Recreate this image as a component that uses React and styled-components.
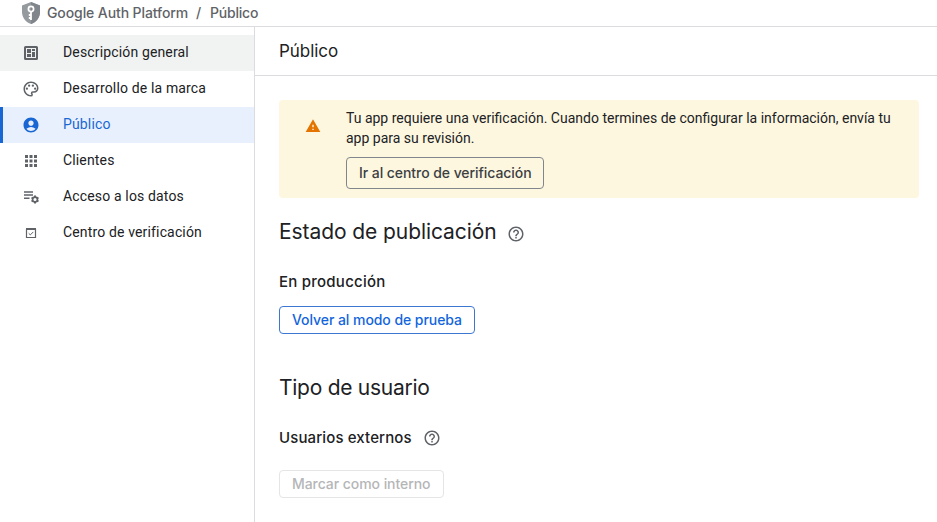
import React from "react";
import styled, { createGlobalStyle, css } from "styled-components";
import { MdOutlinePalette, MdAccountCircle, MdApps, MdHelpOutline, MdWarning } from "react-icons/md";

const Global = createGlobalStyle`
  *, *::before, *::after { box-sizing: border-box; }
  body { margin: 0; background: #fff; color: #202124; font-family: Roboto, sans-serif; font-size: 14px; overflow: hidden; }
  h1, h2, h3, p { margin: 0; }
`;

const display = css`font-family: Inter, sans-serif;`;

const Page = styled.div`
  display: flex;
  flex-direction: column;
  height: 522px;
`;

const TopBar = styled.header`
  ${display}
  flex: none;
  height: 27px;
  display: flex;
  align-items: center;
  padding-left: 22px;
  border-bottom: 1px solid #dadce0;
  color: #5f6368;
  font-size: 14px;
  font-weight: 500;
  line-height: 26px;
  white-space: nowrap;
`;

const Crumb = styled.span`
  width: ${(p) => p.$w}px;
  margin-left: ${(p) => p.$gap}px;
  letter-spacing: ${(p) => p.$track}px;
`;

const Body = styled.div`
  flex: 1;
  display: flex;
  min-height: 0;
`;

const Sidebar = styled.nav`
  width: 255px;
  flex: none;
  padding-top: 8px;
  border-right: 1px solid #dadce0;
`;

const NavItem = styled.a`
  height: 36px;
  display: flex;
  align-items: center;
  padding-left: 19px;
  border-left: 3px solid ${(p) => (p.$active ? "#1967d2" : "transparent")};
  background: ${(p) => (p.$active ? "#e8f0fe" : p.$hover ? "#f1f3f2" : "transparent")};
  color: ${(p) => (p.$active ? "#1967d2" : "#202124")};
  svg { flex: none; color: ${(p) => (p.$active ? "#1967d2" : "#5f6368")}; }
`;

const NavLabel = styled.span`
  margin-left: 23px;
  line-height: 20px;
  padding-bottom: 2px;
  letter-spacing: 0.15px;
  white-space: nowrap;
`;

const Main = styled.main`
  flex: 1;
  min-width: 0;
`;

const TitleBar = styled.div`
  height: 49px;
  padding-left: 24px;
  display: flex;
  align-items: center;
  border-bottom: 1px solid #dadce0;
`;

const Title = styled.h1`
  ${display}
  font-size: 17px;
  font-weight: 400;
  letter-spacing: -0.05px;
`;

const Content = styled.div`
  padding: 24px 18px 0 24px;
`;

const Notice = styled.section`
  height: 98px;
  border-radius: 4px;
  background: #fef7e0;
  display: flex;
  padding: 8px 20px 0 26px;
`;

const NoticeIcon = styled.span`
  width: 41px;
  flex: none;
  padding-top: 10px;
  color: #e37400;
  svg { display: block; }
`;

const NoticeText = styled.p`
  line-height: 20px;
  margin-bottom: 9px;
  white-space: nowrap;
`;

const tones = {
  neutral: ["#3c4043", "#80868b"],
  primary: ["#1265dc", "#3c78d0"],
  disabled: ["#b5b6b7", "#e4e5e6"],
};

const Button = styled.button`
  ${display}
  display: block;
  width: ${(p) => p.$w}px;
  height: ${(p) => p.$h}px;
  padding: 0 0 1px 12px;
  text-align: left;
  border: 1px solid ${(p) => tones[p.$tone][1]};
  border-radius: 4px;
  background: transparent;
  color: ${(p) => tones[p.$tone][0]};
  font-size: 14px;
  font-weight: 500;
  letter-spacing: -0.06px;
  white-space: nowrap;
`;

const Section = styled.section`
  padding-top: ${(p) => p.$top}px;
`;

const Row = styled.div`
  display: flex;
  align-items: center;
  gap: 11px;
  svg { color: #5f6368; flex: none; margin-top: ${(p) => p.$drop || 0}px; }
`;

const Heading = styled.h2`
  ${display}
  font-size: 21px;
  line-height: 28px;
  font-weight: 400;
  letter-spacing: ${(p) => p.$track || 0}px;
  width: ${(p) => p.$w}px;
  white-space: nowrap;
`;

const SubHeading = styled.h3`
  ${display}
  font-size: 15px;
  line-height: 24px;
  font-weight: 500;
  letter-spacing: ${(p) => p.$track || 0}px;
  width: ${(p) => p.$w}px;
  white-space: nowrap;
`;

const Spacer = styled.div`
  height: ${(p) => p.$h}px;
`;

const ShieldIcon = () => (
  <svg width="18" height="22" viewBox="0 0 18 22">
    <path d="M9 0 0 3.6V10c0 5.6 3.8 10.4 9 12 5.2-1.6 9-6.4 9-12V3.6z" fill="#959a9e" />
    <path d="M9 0v22c5.2-1.6 9-6.4 9-12V3.6z" fill="#80868b" />
    <circle cx="9" cy="7" r="2.6" fill="none" stroke="#fff" strokeWidth="1.7" />
    <path d="M9 9.5V18M9 13H6.8M9 16H6.8" fill="none" stroke="#fff" strokeWidth="1.8" />
  </svg>
);

const DashboardIcon = () => (
  <svg width="18" height="18" viewBox="0 0 18 18" fill="currentColor">
    <path
      fillRule="evenodd"
      d="M3.5 2h11A1.5 1.5 0 0 1 16 3.5v11a1.5 1.5 0 0 1-1.5 1.5h-11A1.5 1.5 0 0 1 2 14.5v-11A1.5 1.5 0 0 1 3.5 2zM4 4v10h10V4z"
    />
    <path d="M5 5h4v4H5zM5 10h4v3H5zM10 5h3v2h-3zM10 8h3v5h-3z" />
  </svg>
);

const DataAccessIcon = () => (
  <svg width="18" height="18" viewBox="0 0 18 18" fill="none" stroke="currentColor">
    <path d="M2 4h9M2 7h9M2 10.3h5.5" strokeWidth="1.5" />
    <circle cx="13" cy="11.5" r="2.4" strokeWidth="1.7" />
    <path
      d="M13 7.5v1.7M13 13.8v1.7M9.540 9.5l1.4.8M15.060 12.7l1.4.8M9.540 13.5l1.4-.8M15.060 10.3l1.4-.8"
      strokeWidth="2"
    />
  </svg>
);

const VerifyIcon = () => (
  <svg width="18" height="18" viewBox="0 0 18 18" fill="none" stroke="currentColor">
    <path d="M4.5 5v8.500h9V5" strokeWidth="1.2" />
    <path d="M4 5h10" strokeWidth="2" />
    <path d="m6.700 9.300 1.600 1.600 3-3" />
  </svg>
);

const items = [
  { label: "Descripción general", icon: <DashboardIcon />, hover: true },
  { label: "Desarrollo de la marca", icon: <MdOutlinePalette size={18} /> },
  { label: "Público", icon: <MdAccountCircle size={18} />, active: true },
  { label: "Clientes", icon: <MdApps size={18} /> },
  { label: "Acceso a los datos", icon: <DataAccessIcon /> },
  { label: "Centro de verificación", icon: <VerifyIcon /> },
];

export default function App() {
  return (
    <Page>
      <Global />
      <TopBar>
        <ShieldIcon />
        <Crumb $w={141} $gap={7} $track={-0.1}>Google Auth Platform</Crumb>
        <Crumb $w={6} $gap={8}>/</Crumb>
        <Crumb $w={50} $gap={8} $track={-0.2}>Público</Crumb>
      </TopBar>
      <Body>
        <Sidebar>
          {items.map((it) => (
            <NavItem key={it.label} $active={it.active} $hover={it.hover}>
              {it.icon}
              <NavLabel>{it.label}</NavLabel>
            </NavItem>
          ))}
        </Sidebar>
        <Main>
          <TitleBar>
            <Title>Público</Title>
          </TitleBar>
          <Content>
            <Notice>
              <NoticeIcon><MdWarning size={16} /></NoticeIcon>
              <div>
                <NoticeText>
                  Tu app requiere una verificación. Cuando termines de configurar la información, envía tu
                  <br />
                  app para su revisión.
                </NoticeText>
                <Button $tone="neutral" $w={198} $h={32}>Ir al centro de verificación</Button>
              </div>
            </Notice>
            <Section $top={20}>
              <Row $drop={4}>
                <Heading $w={217} $track={-0.08}>Estado de publicación</Heading>
                <MdHelpOutline size={18} />
              </Row>
              <Spacer $h={24} />
              <SubHeading $track={0.24}>En producción</SubHeading>
              <Spacer $h={12} />
              <Button $tone="primary" $w={196} $h={28}>Volver al modo de prueba</Button>
            </Section>
            <Section $top={40}>
              <Heading $track={-0.27}>Tipo de usuario</Heading>
              <Spacer $h={24} />
              <Row>
                <SubHeading $w={133} $track={0.12}>Usuarios externos</SubHeading>
                <MdHelpOutline size={18} />
              </Row>
              <Spacer $h={20} />
              <Button $tone="disabled" $w={165} $h={28} disabled>Marcar como interno</Button>
            </Section>
          </Content>
        </Main>
      </Body>
    </Page>
  );
}
